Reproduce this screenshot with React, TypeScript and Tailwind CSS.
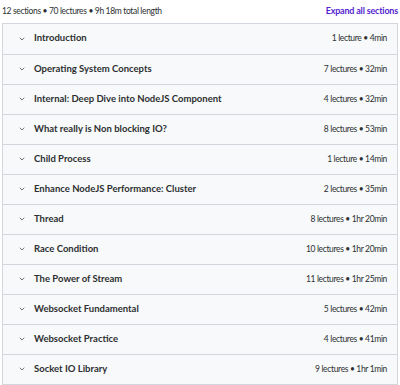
import { ChevronDown } from 'lucide-react';

const sections = [
  { title: 'Introduction', meta: '1 lecture • 4min' },
  { title: 'Operating System Concepts', meta: '7 lectures • 32min' },
  { title: 'Internal: Deep Dive into NodeJS Component', meta: '4 lectures • 32min' },
  { title: 'What really is Non blocking IO?', meta: '8 lectures • 53min' },
  { title: 'Child Process', meta: '1 lecture • 14min' },
  { title: 'Enhance NodeJS Performance: Cluster', meta: '2 lectures • 35min' },
  { title: 'Thread', meta: '8 lectures • 1hr 20min' },
  { title: 'Race Condition', meta: '10 lectures • 1hr 20min' },
  { title: 'The Power of Stream', meta: '11 lectures • 1hr 25min' },
  { title: 'Websocket Fundamental', meta: '5 lectures • 42min' },
  { title: 'Websocket Practice', meta: '4 lectures • 41min' },
  { title: 'Socket IO Library', meta: '9 lectures • 1hr 1min' },
];

export default function App() {
  return (
    <div className="w-[400px] h-[385px] bg-white overflow-hidden font-['Lato',sans-serif] text-[#2d2f31]">
      <div className="flex items-center justify-between h-[23px] pl-[2px] pr-[2px] pb-[1px]">
        <span className="text-[8.5px] tracking-[-0.35px] text-[#2d2f31]">12 sections • 70 lectures • 9h 18m total length</span>
        <span className="text-[9px] tracking-[-0.2px] font-bold text-[#5624d0]">Expand all sections</span>
      </div>
      <div className="mx-[2px] border border-[#d1d7dc]">
        {sections.map((s, i) => (
          <div
            key={i}
            className={`flex items-center h-[30px] bg-[#f7f9fa] pl-[15px] pr-[10px] pb-[1px] ${i > 0 ? 'border-t border-[#d1d7dc]' : ''}`}
          >
            <ChevronDown className="w-[8px] h-[8px] text-[#2d2f31]" strokeWidth={2} />
            <span className="ml-[8px] text-[9.5px] font-bold">{s.title}</span>
            <span className="ml-auto text-[8.5px] tracking-[-0.35px]">{s.meta}</span>
          </div>
        ))}
      </div>
    </div>
  );
}
